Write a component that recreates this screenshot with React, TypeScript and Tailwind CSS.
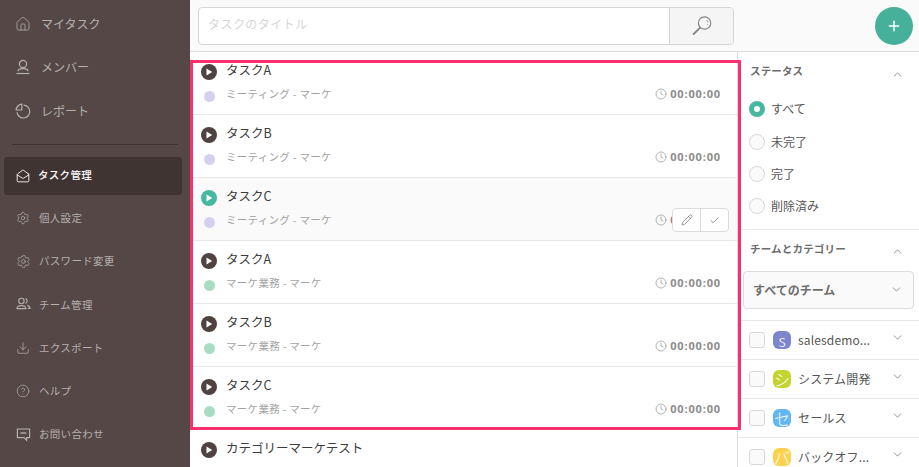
import { ChevronDown, ChevronUp, Check, Clock, Download, House, MailOpen, CircleHelp, Pencil, Plus, Settings } from "lucide-react";
import type { ReactNode } from "react";

const font = "font-['Noto_Sans_CJK_JP','Noto_Sans',sans-serif]";

function PersonIcon() {
  return (
    <svg width="16" height="16" viewBox="0 0 16 16" fill="none" stroke="currentColor" strokeWidth="1.2">
      <circle cx="8" cy="5" r="3.6" />
      <path d="M3 12.2c0-1.5 2-2.6 5-2.6s5 1.1 5 2.6" />
      <path d="M1.5 14.5h13" />
    </svg>
  );
}

function PieIcon() {
  return (
    <svg width="16" height="16" viewBox="0 0 16 16" fill="none" stroke="currentColor" strokeWidth="1.2">
      <path d="M8.6 2.2a6.4 6.4 0 1 1-6.6 7" />
      <path d="M6.8 1.2A5.8 5.8 0 0 0 1.2 7h5.6z" />
    </svg>
  );
}

function TeamIcon() {
  return (
    <svg width="15" height="14" viewBox="0 0 15 14" fill="none" stroke="currentColor" strokeWidth="1.1">
      <circle cx="5.4" cy="4" r="2.7" />
      <path d="M1 11.6c0-1.8 1.9-3 4.4-3s4.4 1.2 4.4 3z" />
      <path d="M9.4 1.6a2.6 2.6 0 0 1 0 4.9M11.2 8.4c1.7.3 2.9 1.4 2.9 3h-2.4" />
    </svg>
  );
}

function ChatIcon() {
  return (
    <svg width="15" height="15" viewBox="0 0 15 15" fill="none" stroke="currentColor" strokeWidth="1.2">
      <path d="M1.4 2h12.2v8.6h-3v2.6l-2.6-2.6H1.4z" />
      <path d="M4.4 6h6" strokeWidth="1.4" />
    </svg>
  );
}

function SearchIcon() {
  return (
    <svg width="20" height="20" viewBox="0 0 20 20" fill="none" stroke="#868686">
      <circle cx="12.6" cy="7" r="6.2" strokeWidth="1.2" />
      <path d="M8 11.8 1.6 18" strokeWidth="1.8" strokeLinecap="round" />
      <path d="M14.8 4.2c.8.6 1.2 1.3 1.3 2.1M15.8 8.4l-.2.6" strokeWidth="1" />
    </svg>
  );
}

function PlayIcon({ active }: { active?: boolean }) {
  return (
    <span className={`flex h-4 w-4 shrink-0 items-center justify-center rounded-full ${active ? "bg-[#46b8a0]" : "bg-[#4f4240]"}`}>
      <svg width="8" height="8" viewBox="0 0 8 8"><path d="M1.5 0.6 7.2 4 1.5 7.4z" fill="#fff" /></svg>
    </span>
  );
}

function NavItem({ icon, label, big, active }: { icon: ReactNode; label: string; big?: boolean; active?: boolean }) {
  return (
    <div
      className={`mx-1 flex w-[178px] items-center rounded pl-[11px] ${big ? "h-[43.5px] text-[12px]" : "text-[10.5px]"} ${
        active ? "h-[38px] bg-[#403432] font-medium text-white" : big ? "text-[#b5afae]" : "h-[43.2px] text-[#b5afae]"
      }`}
    >
      <span className="flex w-[16px] shrink-0 justify-center">{icon}</span>
      <span className={big ? "ml-[10px]" : active ? "ml-[7px] -translate-y-[1px] tracking-[0.3px]" : "ml-[8px] tracking-[0.3px]"}>{label}</span>
    </div>
  );
}

function TaskRow({ title, meta, dot, hovered }: { title: string; meta?: string; dot?: string; hovered?: boolean }) {
  return (
    <div className={`relative h-[63px] border-b border-[#e8e8e8] pl-[11px] pr-4 ${hovered ? "bg-[#fafafa]" : ""}`}>
      <div className="flex h-[37px] items-center pt-[2px]">
        <PlayIcon active={hovered} />
        <span className="ml-[9px] -translate-y-[1px] text-[12.5px] text-[#3c3c3c]">{title}</span>
      </div>
      {meta && (
        <div className="-mt-[3px] flex h-[16px] items-center">
          <span className={`ml-[3px] h-[11px] w-[11px] translate-y-[2px] rounded-full ${dot}`} />
          <span className="ml-[11px] text-[10.5px] tracking-[0.3px] text-[#a3a3a3]">{meta}</span>
          <span className="ml-auto flex items-center gap-[3px] text-[#8c8c8c]">
            <Clock size={12} strokeWidth={1.3} />
            <span className="text-[11px] font-bold tracking-[0.85px] font-['Open_Sans',sans-serif]">00:00:00</span>
          </span>
        </div>
      )}
      {hovered && (
        <div className="absolute right-[8px] top-[30px] flex h-[24px] w-[57px] rounded-[4px] border border-[#dcdcdc] bg-white text-[#666]">
          <span className="flex w-[28px] items-center justify-center border-r border-[#dcdcdc]"><Pencil size={12} strokeWidth={1.3} /></span>
          <span className="flex flex-1 items-center justify-center"><Check size={11} strokeWidth={1.5} /></span>
        </div>
      )}
    </div>
  );
}

function Radio({ label, on }: { label: string; on?: boolean }) {
  return (
    <div className="flex h-[32.4px] items-center pl-[11px]">
      {on ? (
        <span className="flex h-4 w-4 items-center justify-center rounded-full bg-[#46b8a0]"><span className="h-[6px] w-[6px] rounded-full bg-white" /></span>
      ) : (
        <span className="h-4 w-4 rounded-full border border-[#d8d8d8] bg-[#fafafa]" />
      )}
      <span className="ml-[6px] text-[12px] text-[#555]">{label}</span>
    </div>
  );
}

function TeamRow({ letter, color, label }: { letter: string; color: string; label: string }) {
  return (
    <div className="flex h-[39px] items-center border-t border-[#e8e8e8] pl-[11px] pr-[15px]">
      <span className="h-4 w-4 rounded-[3px] border border-[#d8d8d8] bg-[#fafafa]" />
      <span className={`ml-[8px] flex h-[18px] w-[18px] items-center justify-center rounded-[6px] text-[16px] leading-none font-light text-white ${color}`}>{letter}</span>
      <span className="ml-[7px] text-[12px] leading-[16px] tracking-[0.15px] text-[#555]">{label}</span>
      <ChevronDown className="ml-auto -translate-y-[2px] text-[#666]" size={13} strokeWidth={1.3} />
    </div>
  );
}

export default function App() {
  return (
    <div className={`flex h-[467px] w-[919px] overflow-hidden bg-white ${font}`}>
      {/* sidebar */}
      <aside className="flex w-[190px] shrink-0 flex-col bg-[#544745] pt-[2px]">
        <NavItem big icon={<House size={16} strokeWidth={1.2} />} label="マイタスク" />
        <NavItem big icon={<PersonIcon />} label="メンバー" />
        <NavItem big icon={<PieIcon />} label="レポート" />
        <div className="mx-3 mb-3 mt-[11px] border-t border-[#3f3331]" />
        <NavItem active icon={<MailOpen size={14} strokeWidth={1.5} />} label="タスク管理" />
        <div className="h-[2px]" />
        <NavItem icon={<Settings size={14} strokeWidth={1.2} />} label="個人設定" />
        <NavItem icon={<Settings size={15} strokeWidth={1.2} />} label="パスワード変更" />
        <NavItem icon={<TeamIcon />} label="チーム管理" />
        <NavItem icon={<Download size={14} strokeWidth={1.3} />} label="エクスポート" />
        <NavItem icon={<CircleHelp size={14} strokeWidth={1.2} />} label="ヘルプ" />
        <NavItem icon={<ChatIcon />} label="お問い合わせ" />
      </aside>

      <div className="relative flex min-w-0 flex-1 flex-col">
        {/* top bar */}
        <header className="flex h-[52px] shrink-0 items-center border-b border-[#dcdcdc] bg-[#fafafa] pl-2 pr-[6px]">
          <div className="flex h-[38px] w-[536px] overflow-hidden rounded-[4px] border border-[#d6d6d6] bg-white">
            <div className="flex flex-1 items-center pb-[3px] pl-[9px] text-[12px] tracking-[0.45px] text-[#d6d6d6]">タスクのタイトル</div>
            <div className="flex w-[64px] items-center justify-center border-l border-[#d6d6d6] bg-[#f5f5f5]"><SearchIcon /></div>
          </div>
          <button className="ml-auto flex h-[38px] w-[38px] items-center justify-center rounded-full bg-[#46b09a] text-white">
            <Plus size={16} strokeWidth={2.2} />
          </button>
        </header>

        <div className="flex min-h-0 flex-1">
          {/* task list */}
          <main className="w-[547px] shrink-0 overflow-hidden">
            <TaskRow title="タスクA" meta="ミーティング - マーケ" dot="bg-[#d3d0f0]" />
            <TaskRow title="タスクB" meta="ミーティング - マーケ" dot="bg-[#d3d0f0]" />
            <TaskRow hovered title="タスクC" meta="ミーティング - マーケ" dot="bg-[#d3d0f0]" />
            <TaskRow title="タスクA" meta="マーケ業務 - マーケ" dot="bg-[#a9dcc3]" />
            <TaskRow title="タスクB" meta="マーケ業務 - マーケ" dot="bg-[#a9dcc3]" />
            <TaskRow title="タスクC" meta="マーケ業務 - マーケ" dot="bg-[#a9dcc3]" />
            <TaskRow title="カテゴリーマーケテスト" />
          </main>

          {/* filters */}
          <section className="min-w-0 flex-1 overflow-hidden border-l border-[#dcdcdc]">
            <div className="flex h-[38px] items-center justify-between pl-[12px] pr-[15px]">
              <span className="text-[10.5px] font-bold tracking-[0.15px] text-[#6d6d6d]">ステータス</span>
              <ChevronUp className="translate-y-[3px] text-[#666]" size={13} strokeWidth={1.3} />
            </div>
            <div className="pt-[3px]">
              <Radio on label="すべて" />
              <Radio label="未完了" />
              <Radio label="完了" />
              <Radio label="削除済み" />
            </div>
            <div className="mt-[6px] border-t border-[#e8e8e8]">
              <div className="flex h-[41px] items-center justify-between pb-[3px] pl-[12px] pr-[15px]">
                <span className="text-[10.5px] font-bold tracking-[0.2px] text-[#6d6d6d]">チームとカテゴリー</span>
                <ChevronUp className="translate-y-[3px] text-[#666]" size={13} strokeWidth={1.3} />
              </div>
              <div className="mx-[5px] flex h-[38px] items-center justify-between rounded-[4px] border border-[#dcdcdc] bg-[#fafafa] pl-[9px] pr-[10px] text-[12px] font-bold text-[#6d6d6d]">
                すべてのチーム
                <ChevronDown size={13} strokeWidth={1.3} />
              </div>
            </div>
            <div className="mt-[11px]">
              <TeamRow letter="s" color="bg-[#7d85cc]" label="salesdemo..." />
              <TeamRow letter="シ" color="bg-[#c2d42f]" label="システム開発" />
              <TeamRow letter="セ" color="bg-[#62b6f2]" label="セールス" />
              <TeamRow letter="バ" color="bg-[#fbd24e]" label="バックオフ..." />
            </div>
          </section>
        </div>

        {/* highlight frame */}
        <div className="pointer-events-none absolute left-0 top-[60px] h-[370px] w-[551px] border-[3px] border-[#f9306f]" />
      </div>
    </div>
  );
}
